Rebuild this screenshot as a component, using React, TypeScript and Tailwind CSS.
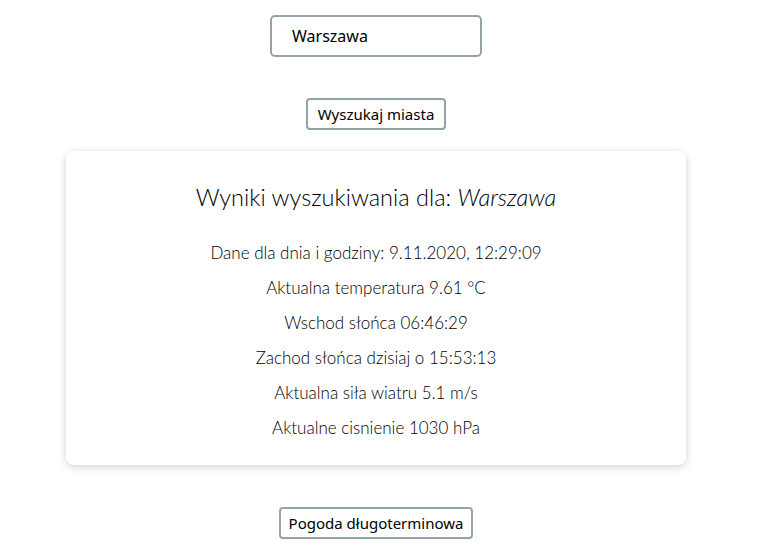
import React from 'react';

const App = () => {
  const lines = [
    'Dane dla dnia i godziny: 9.11.2020, 12:29:09',
    'Aktualna temperatura 9.61 °C',
    'Wschod słońca 06:46:29',
    'Zachod słońca dzisiaj o 15:53:13',
    'Aktualna siła wiatru 5.1 m/s',
    'Aktualne cisnienie 1030 hPa',
  ];

  return (
    <div className="min-h-screen bg-white flex flex-col items-center pt-[15px] pr-[9px]">
      <input
        type="text"
        defaultValue="Warszawa"
        className="w-[212px] h-[42px] border-2 border-[#95a5a6] rounded-[5px] pl-[20px] text-[16px] text-black outline-none"
        style={{ fontFamily: '"Noto Sans", sans-serif' }}
      />

      <button
        className="mt-[41px] w-[140px] h-[32px] border-2 border-[#95a5a6] rounded-[4px] bg-white text-[15px] text-black"
        style={{ fontFamily: '"Noto Sans", sans-serif' }}
      >
        Wyszukaj miasta
      </button>

      <div
        className="mt-[21px] w-[620px] h-[314px] rounded-[8px] bg-white shadow-[0_2px_8px_rgba(0,0,0,0.18)] flex flex-col items-center pt-[33px] text-black"
        style={{ fontFamily: 'Lato, sans-serif' }}
      >
        <h2 className="text-[23.5px] leading-[26px] font-light">
          Wyniki wyszukiwania dla: <i>Warszawa</i>
        </h2>
        <div className="mt-[25px] flex flex-col items-center font-light">
          {lines.map((line, i) => (
            <p key={i} className="text-[17px] leading-[35px]">
              {line}
            </p>
          ))}
        </div>
      </div>

      <button
        className="mt-[42px] w-[194px] h-[32px] border-2 border-[#95a5a6] rounded-[4px] bg-white text-[15px] text-black"
        style={{ fontFamily: '"Noto Sans", sans-serif' }}
      >
        Pogoda długoterminowa
      </button>
    </div>
  );
};

export default App;
